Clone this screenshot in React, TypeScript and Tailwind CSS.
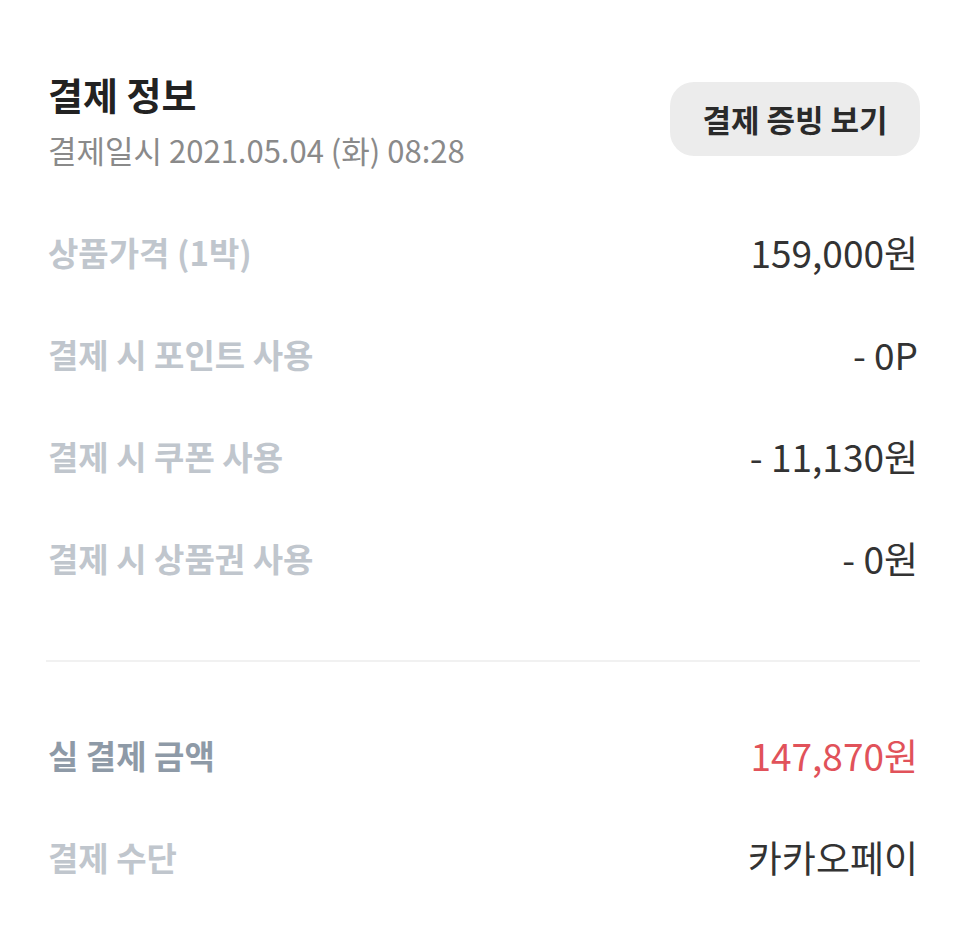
const rows = [
    { label: "상품가격 (1박)", value: "159,000원" },
    { label: "결제 시 포인트 사용", value: "- 0P" },
    { label: "결제 시 쿠폰 사용", value: "- 11,130원" },
    { label: "결제 시 상품권 사용", value: "- 0원" },
];

const App = () => {
    return (
        <div
            className="bg-white min-h-[933px] pl-[48px] pr-[46px] pt-[70px] text-[#333]"
            style={{ fontFamily: '"Noto Sans CJK KR", "Noto Sans", sans-serif' }}
        >
            {/* header */}
            <div className="flex items-start justify-between">
                <div className="flex flex-col">
                    <h1 className="text-[38px] leading-[48px] font-bold text-[#222]">결제 정보</h1>
                    <p className="mt-[12px] text-[31px] leading-[40px] text-[#8a8a8a]">
                        결제일시 2021.05.04 (화) 08:28
                    </p>
                </div>
                <button className="mt-[12px] h-[74px] w-[250px] rounded-[24px] bg-[#ececec] text-[31px] font-bold text-[#2a2a2a]">
                    결제 증빙 보기
                </button>
            </div>
            {/* list */}
            <div className="mt-[32px] flex flex-col pr-[2px]">
                {rows.map((row) => (
                    <div key={row.label} className="flex h-[102px] items-center justify-between">
                        <span className="text-[33px] font-bold text-[#c0c6cd]">{row.label}</span>
                        <span className="text-[37px] text-[#333]">{row.value}</span>
                    </div>
                ))}
            </div>
            <div className="mt-[50px] -ml-[2px] h-[2px] bg-[#f1f1f1]" />
            {/* total */}
            <div className="mt-[43px] flex flex-col pr-[2px]">
                <div className="flex h-[102px] items-center justify-between">
                    <span className="text-[33px] font-bold text-[#8e9aa7]">실 결제 금액</span>
                    <span className="text-[37px] text-[#e1525a]">147,870원</span>
                </div>
                <div className="flex h-[102px] items-center justify-between">
                    <span className="text-[33px] font-bold text-[#c0c6cd]">결제 수단</span>
                    <span className="text-[37px] text-[#333]">카카오페이</span>
                </div>
            </div>
        </div>
    );
};

export default App;
